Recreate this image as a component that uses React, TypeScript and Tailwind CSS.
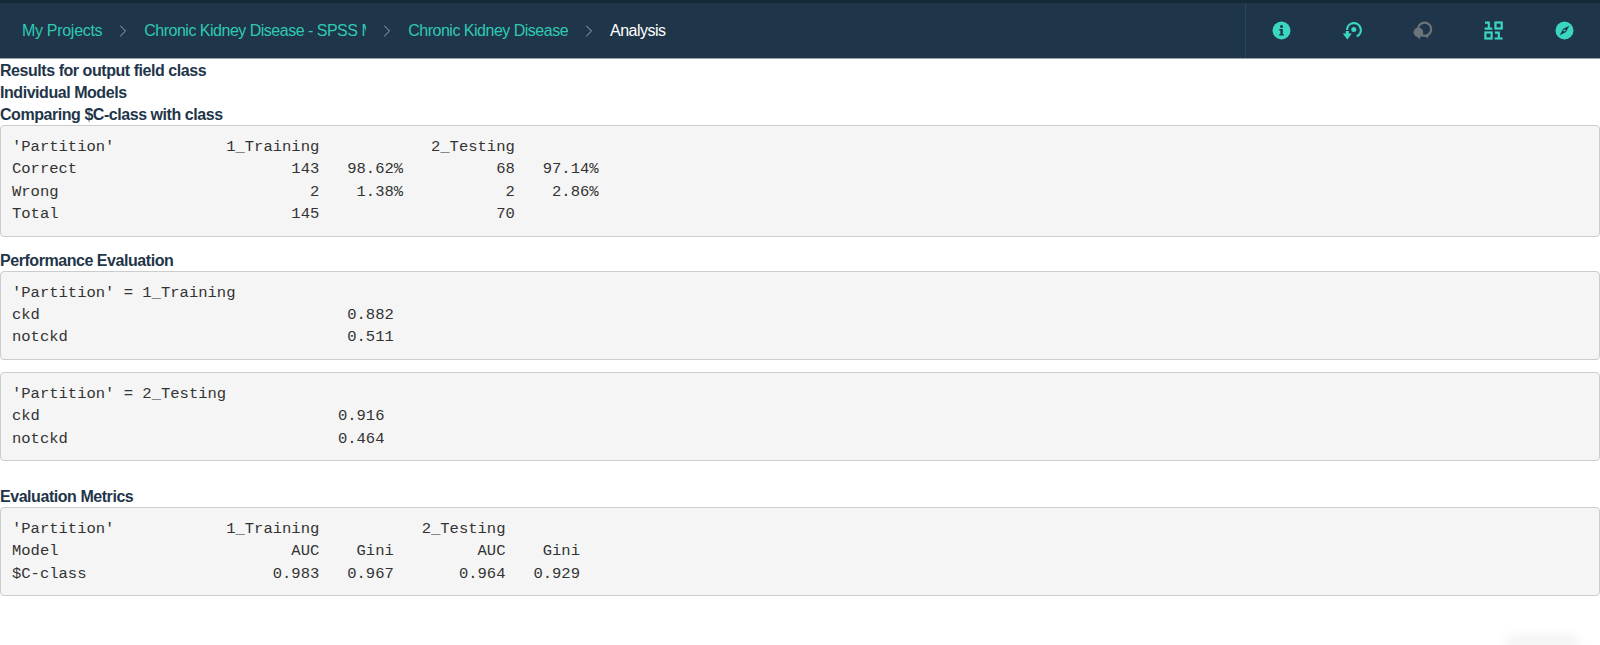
import type { ReactNode } from "react";
import { ChevronRight } from "lucide-react";

const sans = "font-['Liberation_Sans',Arial,sans-serif]";

function InfoIcon() {
  return (
    <svg width="19" height="19" viewBox="0 0 19 19">
      <circle cx="9.5" cy="9.5" r="9" fill="#3ad6c0" />
      <circle cx="9.5" cy="5.4" r="1.5" fill="#1f364a" />
      <path d="M7.3 8h3.5v5.2h1.1v1.4H7.2v-1.4h1.2V9.4H7.3z" fill="#1f364a" />
    </svg>
  );
}

function RestoreIcon() {
  return (
    <svg width="20" height="20" viewBox="0 0 20 20" fill="none">
      <path d="M5 9a6.9 6.9 0 1 1 9.7 6.3" stroke="#3ad6c0" strokeWidth="2.2" />
      <circle cx="11.8" cy="8.4" r="2.5" fill="#3ad6c0" />
      <path d="M0.8 12.6h3v-2.6h3v2.6h3L5.3 18.4z" fill="#3ad6c0" />
    </svg>
  );
}

function ChatIcon() {
  return (
    <svg width="20" height="20" viewBox="0 0 20 20" fill="none">
      <circle cx="11.6" cy="8.2" r="6.6" stroke="#6c747a" strokeWidth="2.2" />
      <circle cx="5.4" cy="11.4" r="4.8" fill="#6c747a" />
      <path d="M4 15h4l-1.8 3.4zM12.5 14.5h3.5l-1.8 3z" fill="#6c747a" />
    </svg>
  );
}

function BinaryIcon() {
  return (
    <svg width="19" height="19" viewBox="0 0 19 19" fill="none">
      <path d="M1 1.6h3.8v6.6M0.6 7.6h7.6" stroke="#3ad6c0" strokeWidth="2.1" />
      <rect x="11.5" y="1.5" width="6.2" height="6" stroke="#3ad6c0" strokeWidth="2.2" />
      <rect x="1.4" y="11.5" width="6.2" height="6" stroke="#3ad6c0" strokeWidth="2.2" />
      <path d="M11 11.6h3.8v6.4M10.6 17.5h8" stroke="#3ad6c0" strokeWidth="2.1" />
    </svg>
  );
}

function CompassIcon() {
  return (
    <svg width="19" height="19" viewBox="0 0 19 19">
      <circle cx="9.5" cy="9.5" r="9" fill="#3ad6c0" />
      <path d="M14.3 4.7 11 11 4.7 14.3 8 8z" fill="#1f364a" />
      <circle cx="9.5" cy="9.5" r="1.1" fill="#3ad6c0" />
    </svg>
  );
}

function Crumb({ children, className = "" }: { children: ReactNode; className?: string }) {
  return <span className={`whitespace-nowrap text-[#2fc9b3] ${className}`}>{children}</span>;
}

function Separator() {
  return <ChevronRight className="mx-[11px] h-[20px] w-[20px] shrink-0 text-[#aab4ba]" strokeWidth={1.1} />;
}

function Output({ children, className = "" }: { children: string; className?: string }) {
  return (
    <pre className={`rounded border border-[#ccc] bg-[#f5f5f5] px-[11px] py-[10px] font-['Liberation_Mono','Courier_New',monospace] text-[15.52px] leading-[22.4px] text-[#333] ${className}`}>
      {children}
    </pre>
  );
}

function Heading({ children, className = "" }: { children: ReactNode; className?: string }) {
  return <h4 className={`pt-[2px] text-[16px] font-bold leading-[20px] tracking-[-0.45px] text-[#1f364a] ${className}`}>{children}</h4>;
}

const comparing = `'Partition'            1_Training            2_Testing
Correct                       143   98.62%          68   97.14%
Wrong                           2    1.38%           2    2.86%
Total                         145                   70`;

const training = `'Partition' = 1_Training
ckd                                 0.882
notckd                              0.511`;

const testing = `'Partition' = 2_Testing
ckd                                0.916
notckd                             0.464`;

const metrics = `'Partition'            1_Training           2_Testing
Model                         AUC    Gini         AUC    Gini
$C-class                    0.983   0.967       0.964   0.929`;

export default function App() {
  return (
    <div className={`relative h-[645px] overflow-hidden bg-white ${sans}`}>
      <header className="flex h-[59px] border-t-[3px] border-b border-t-[#152a38] border-b-[#9aa3aa] bg-[#1f364a] text-[16px] tracking-[-0.5px]">
        <nav className="flex flex-1 items-center pl-[22px]">
          <Crumb className="tracking-[-0.3px]">My Projects</Crumb>
          <Separator />
          <Crumb className="w-[222px] overflow-hidden">Chronic Kidney Disease - SPSS Modeler</Crumb>
          <Separator />
          <Crumb>Chronic Kidney Disease</Crumb>
          <Separator />
          <span className="text-white">Analysis</span>
        </nav>
        <div className="flex w-[355px] border-l border-[#2a465c]">
          <div className="flex w-[71.2px] items-center justify-center"><InfoIcon /></div>
          <div className="flex w-[71.2px] items-center justify-center"><RestoreIcon /></div>
          <div className="flex w-[71.2px] items-center justify-center"><ChatIcon /></div>
          <div className="flex w-[71.2px] items-center justify-center"><BinaryIcon /></div>
          <div className="flex w-[71.2px] items-center justify-center"><CompassIcon /></div>
        </div>
      </header>

      <main>
        <Heading>Results for output field class</Heading>
        <Heading>Individual Models</Heading>
        <Heading>Comparing $C-class with class</Heading>
        <Output>{comparing}</Output>
        <Heading className="mt-[12px]">Performance Evaluation</Heading>
        <Output>{training}</Output>
        <Output className="mt-[12px]">{testing}</Output>
        <Heading className="mt-[24px]">Evaluation Metrics</Heading>
        <Output>{metrics}</Output>
      </main>

      <div className="absolute left-[1505px] top-[634px] h-[16px] w-[75px] rounded-full bg-[#f5f5f5] blur-[4px]" />
    </div>
  );
}
